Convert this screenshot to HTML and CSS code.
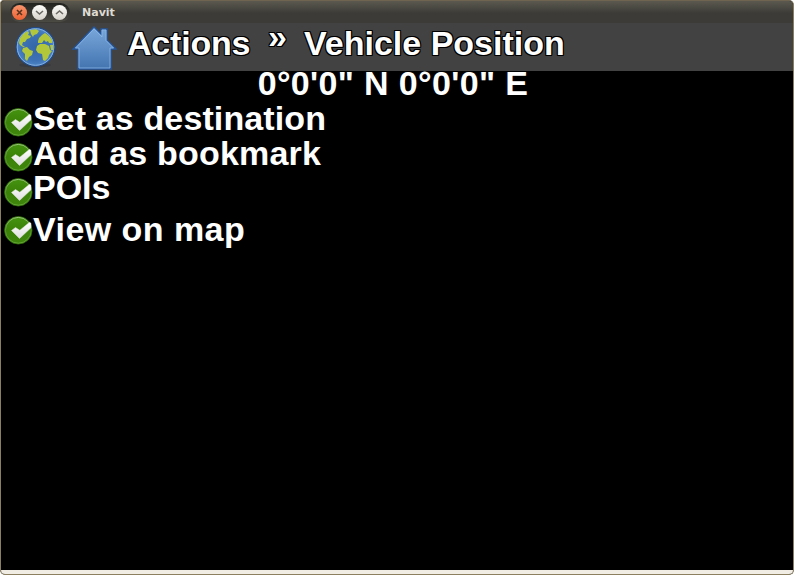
FILE: index.html
```html
<!DOCTYPE html>
<html lang="en">
<head>
<meta charset="utf-8">
<title>Navit</title>
<link rel="stylesheet" href="styles.css">
</head>
<body>
<svg class="defs" width="0" height="0" aria-hidden="true">
  <defs>
    <linearGradient id="green" x1="0" y1="0" x2="0" y2="1"><stop offset="0" stop-color="#459310"/><stop offset=".5" stop-color="#3a8208"/><stop offset="1" stop-color="#3f860c"/></linearGradient>
    <linearGradient id="rim" x1="0" y1="0" x2="0" y2="1"><stop offset="0" stop-color="#a5cb8b"/><stop offset=".5" stop-color="#5a9a30"/><stop offset="1" stop-color="#67a83a"/></linearGradient>
    <linearGradient id="tick" x1="0" y1="0" x2="0" y2="1"><stop offset="0" stop-color="#fff"/><stop offset="1" stop-color="#dedede"/></linearGradient>
    <symbol id="check" viewBox="0 0 30 30">
      <circle cx="15.300" cy="15.300" r="13.700" fill="url(#green)" stroke="#2d6808" stroke-width="1"/>
      <circle cx="15.300" cy="15.300" r="12.900" fill="none" stroke="url(#rim)" stroke-width=".9"/>
      <path d="M8.500 15.500l4-3 4.300 2.800L26.500 7.300l1.500 1 0 4.500L16.500 23.500z" fill="url(#tick)" stroke="#e4e9df" stroke-width=".5"/>
    </symbol>
  </defs>
</svg>
<div class="window">
  <header class="titlebar">
    <div class="controls">
      <span class="control close"><svg viewBox="0 0 15 15"><path d="M5 5l5 5M10 5l-5 5"/></svg></span>
      <span class="control"><svg viewBox="0 0 15 15"><path d="M4 6l3.500 3L11 6"/></svg></span>
      <span class="control"><svg viewBox="0 0 15 15"><path d="M4 9l3.500-3L11 9"/></svg></span>
    </div>
    <span class="caption">Navit</span>
  </header>
  <nav class="toolbar">
    <svg class="globe" viewBox="0 0 42 42">
      <defs><radialGradient id="sea"><stop offset="0" stop-color="#3466a8"/><stop offset=".7" stop-color="#3d73b6"/><stop offset="1" stop-color="#4d86c7"/></radialGradient></defs>
      <ellipse cx="21" cy="39" rx="16" ry="2.500" fill="#383a3e"/>
      <circle cx="21.500" cy="21" r="19.300" fill="url(#sea)" stroke="#204a87" stroke-width="1.200"/>
      <g fill="#b2c73a">
        <path d="M5 17L6 12 10 7 14 5 15 7 14 9 17 10 16 12 13 13 11 16 9 16 8 19 11 21 9 21 6 19z"/>
        <path d="M16 4L22 3 25 5 23 8 20 9 19 11 17 8z"/>
        <path d="M9 22L13 21 16 24 19 25 18 29 15 31 13 35 11 33 11 28 8 25z"/>
        <path d="M24 15L25 12 28 9 31 7 35 10 38 14 38 17 35 17 34 15 32 16 30 14 28 17 24 17z"/>
        <path d="M23 20L26 18 31 18 35 20 36 24 38 25 35 29 34 32 31 35 29 34 28 28 24 27 22 24z"/>
        <path d="M36 19L39 19 39 24 37 24z"/>
      </g>
      <circle cx="21.500" cy="21" r="18.300" fill="none" stroke="#85afe0" stroke-width="1"/>
    </svg>
    <svg class="house" viewBox="0 0 46 46">
      <defs><linearGradient id="roof" x1="0" y1="0" x2="0" y2="1"><stop offset="0" stop-color="#7aa8dc"/><stop offset="1" stop-color="#4374af"/></linearGradient></defs>
      <path d="M23 3L2 25h5v20h33V25h5L36 16V5h-6v5z" fill="url(#roof)" stroke="#23559c" stroke-width="1.300"/>
      <path d="M23 5L4.500 24H8v20h31V24h3.500L35 16.500V6h-4v7z" fill="none" stroke="#8db8e6" stroke-width=".8"/>
    </svg>
    <span class="crumb actions">Actions</span>
    <span class="crumb divider">»</span>
    <span class="crumb position">Vehicle Position</span>
  </nav>
  <main>
    <h1 class="coords">0°0'0" N 0°0'0" E</h1>
    <ul class="menu">
      <li><svg><use href="#check"/></svg><span class="wide">Set as destination</span></li>
      <li><svg><use href="#check"/></svg><span class="mark">Add as bookmark</span></li>
      <li><svg><use href="#check"/></svg><span class="poi">POIs</span></li>
      <li class="view"><svg><use href="#check"/></svg><span>View on map</span></li>
    </ul>
  </main>
  <footer class="edge"></footer>
</div>
</body>
</html>
```
FILE: styles.css
```css
* { box-sizing: border-box; }
body { margin: 0; background: #fff; }
.defs { position: absolute; }
.window {
  width: 794px;
  height: 575px;
  display: flex;
  flex-direction: column;
  border: 1px solid #8c7f60;
  border-top-color: #6e6450;
  border-radius: 4px 5px 5px 5px;
  overflow: hidden;
  background: #000;
  color: #fff;
  font: bold 34px/34px "Liberation Sans", Arial, sans-serif;
  white-space: nowrap;
}
.titlebar {
  flex: 0 0 22px;
  height: 22px;
  display: flex;
  align-items: center;
  background: linear-gradient(#5b594f, #3c3b37 55%, #3c3b37);
}
.controls {
  display: flex;
  gap: 5px;
  width: 60px;
  height: 19px;
  margin-left: 9px;
  padding: 2px;
  border-radius: 10px;
  background: linear-gradient(#22221f, #4b4a43);
}
.control {
  width: 15px;
  height: 15px;
  border-radius: 50%;
  background: linear-gradient(#fffefb, #d5d1ca);
}
.control.close { background: linear-gradient(#f9956c, #ed6133); }
.control svg { display: block; width: 15px; height: 15px; fill: none; stroke: #6a6862; stroke-width: 1.6; }
.control.close svg { stroke: #57331f; }
.caption {
  margin: 2px 0 0 12px;
  color: #dfdbd2;
  font: bold 11px/20px "DejaVu Sans", sans-serif;
}
.toolbar {
  flex: 0 0 48px;
  display: flex;
  align-items: flex-start;
  padding-left: 13px;
  background: #424242;
}
.globe { width: 42px; height: 42px; margin-top: 3px; }
.house { width: 46px; height: 46px; margin: 1px 0 0 15px; }
.crumb {
  margin-top: 3px;
  text-shadow: -1px -1px #000, 0 -1px #000, 1px -1px #000, -1px 0 #000, 1px 0 #000, -1px 1px #000, 0 1px #000, 1px 1px #000;
}
.actions { width: 141px; margin-left: 10px; letter-spacing: -.2px; }
.divider { width: 36px; margin-top: -4px; }
.coords {
  margin: -5px 0 0;
  padding-right: 8px;
  font: inherit;
  letter-spacing: .36px;
  text-align: center;
}
.menu { margin: 0; padding: 0 0 0 2px; list-style: none; }
.menu li { display: flex; height: 35px; }
.menu svg { flex: none; width: 30px; height: 30px; margin-top: 7px; }
.menu span { margin-top: 1px; }
.menu .wide { letter-spacing: .12px; }
.menu .mark { letter-spacing: .18px; }
.menu .poi { margin-top: 0; }
.menu .view { margin-top: 3px; letter-spacing: .45px; }
.menu .view span { margin-top: 4px; }
main { flex: 1; }
.edge { flex: 0 0 4px; background: #f2ede4; }
```
